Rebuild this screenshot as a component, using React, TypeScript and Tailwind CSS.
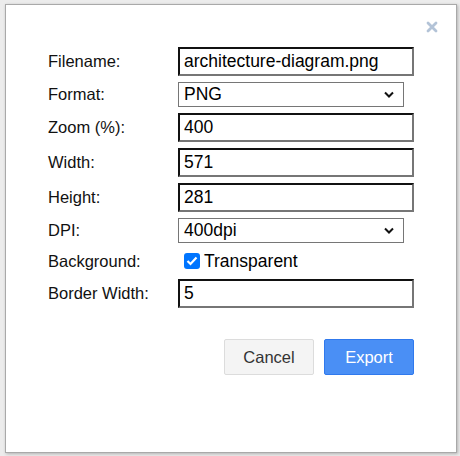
import { useState } from 'react';

const font = { fontFamily: '"Liberation Sans", Arial, sans-serif' };

function TextInput({ value }: { value: string }) {
  return (
    <div className="flex h-[29px] w-[236px] items-center border-2 border-t-[#111] border-l-[#111] border-r-[#767676] border-b-[#767676] bg-white pl-1 text-[17.5px] text-black">
      {value}
    </div>
  );
}

function Select({ value }: { value: string }) {
  return (
    <div className="flex h-[25px] w-[226px] items-center justify-between border border-[#767676] bg-white pl-[5px] pr-[9px] text-[17.5px] text-black">
      <span>{value}</span>
      <svg width="10" height="7" viewBox="0 0 10 7">
        <path d="M1 1.5 L5 5.5 L9 1.5" fill="none" stroke="#111" strokeWidth="2" />
      </svg>
    </div>
  );
}

function Row({ label, children }: { label: string; children: React.ReactNode }) {
  return (
    <div className="flex items-center">
      <div className="w-[130px] text-[16.5px] text-[#111]">{label}</div>
      {children}
    </div>
  );
}

export default function App() {
  const [transparent, setTransparent] = useState(true);

  return (
    <div className="h-[456px] w-[460px] bg-[#ececec] pl-[5px] pt-[4px]" style={font}>
      <div className="relative h-[449px] w-[452px] border border-[#a9a9a9] bg-white shadow-[1px_1px_3px_rgba(0,0,0,0.25)]">
        {/* Close */}
        <button className="absolute right-[14px] top-[12px] p-1">
          <svg width="12" height="12" viewBox="0 0 12 12">
            <path d="M2 2 L10 10 M10 2 L2 10" stroke="#b3c3d7" strokeWidth="2.8" strokeLinecap="round" />
          </svg>
        </button>

        <div className="flex flex-col gap-[6px] pl-[42px] pt-[42px]">
          <Row label="Filename:">
            <TextInput value="architecture-diagram.png" />
          </Row>
          <Row label="Format:">
            <Select value="PNG" />
          </Row>
          <Row label="Zoom (%):">
            <TextInput value="400" />
          </Row>
          <Row label="Width:">
            <TextInput value="571" />
          </Row>
          <Row label="Height:">
            <TextInput value="281" />
          </Row>
          <Row label="DPI:">
            <Select value="400dpi" />
          </Row>
          <div className="flex h-[24px] items-center">
            <div className="w-[130px] self-start text-[16.5px] text-[#111]">Background:</div>
            <label className="flex items-center gap-[4px] pl-[6px] text-[17.5px] text-black">
              <span
                onClick={() => setTransparent(!transparent)}
                className="flex h-[16px] w-[16px] items-center justify-center rounded-[3px] bg-[#0075ff]"
              >
                {transparent && (
                  <svg width="12" height="10" viewBox="0 0 12 10">
                    <path d="M1.5 5 L4.5 8 L10.5 1.5" fill="none" stroke="#fff" strokeWidth="2.2" />
                  </svg>
                )}
              </span>
              Transparent
            </label>
          </div>
          <Row label="Border Width:">
            <TextInput value="5" />
          </Row>
        </div>

        <div className="mt-[31px] flex justify-end gap-[10px] pr-[42px]">
          <button className="h-[36px] w-[90px] rounded-[2px] border border-[#dcdcdc] bg-[#f4f4f4] text-[16.5px] text-[#333]">
            Cancel
          </button>
          <button className="h-[36px] w-[90px] rounded-[2px] border border-[#3079ed] bg-[#4a8ff5] text-[16.5px] text-white">
            Export
          </button>
        </div>
      </div>
    </div>
  );
}
